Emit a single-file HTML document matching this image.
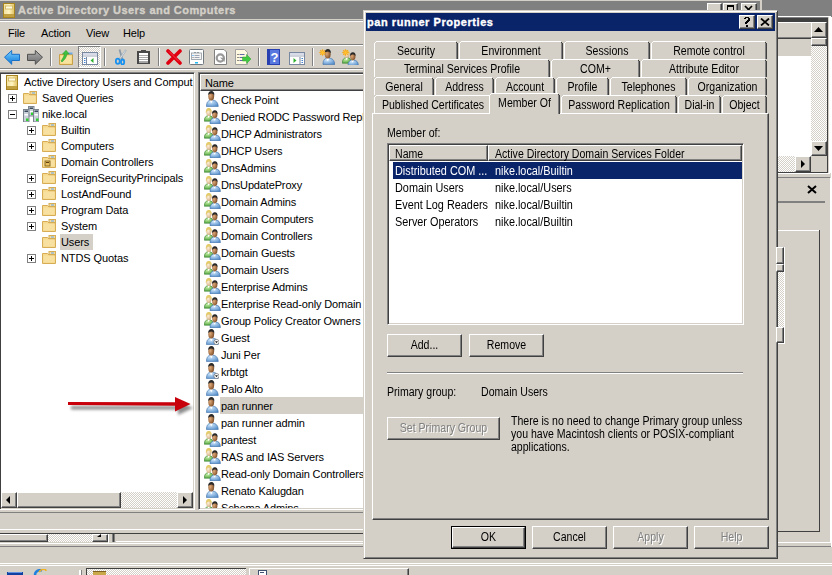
<!DOCTYPE html><html><head><meta charset="utf-8"><style>
html,body{margin:0;padding:0;}
body{width:832px;height:575px;overflow:hidden;position:relative;background:#d4d0c8;font-family:"Liberation Sans", sans-serif;}
body div{position:absolute;box-sizing:content-box;}
.t{white-space:nowrap;line-height:13px;}
.d{font-size:12px;transform:scaleX(0.88);transform-origin:0 0;}
.c{text-align:center;transform-origin:50% 0;}

</style></head><body>
<svg width="0" height="0" style="position:absolute"><defs><radialGradient id="ub" cx="0.35" cy="0.3" r="0.85"><stop offset="0" stop-color="#d0e8fc"/><stop offset="1" stop-color="#4a86c6"/></radialGradient><radialGradient id="gb" cx="0.35" cy="0.3" r="0.85"><stop offset="0" stop-color="#c8f0a8"/><stop offset="1" stop-color="#3e9a30"/></radialGradient><radialGradient id="uh" cx="0.35" cy="0.45" r="0.75"><stop offset="0" stop-color="#e0aa78"/><stop offset="1" stop-color="#70401c"/></radialGradient><radialGradient id="wh" cx="0.4" cy="0.45" r="0.75"><stop offset="0" stop-color="#fff0d8"/><stop offset="1" stop-color="#c8a070"/></radialGradient></defs></svg>
<div style="left:0px;top:0px;width:832px;height:1px;background:#d4d0c8"></div>
<div style="left:0px;top:1px;width:760px;height:18px;background:#808080"></div>
<div style="left:760px;top:0px;width:2px;height:19px;background:#d4d0c8"></div>
<div style="left:762px;top:0px;width:70px;height:19px;background:#808080"></div>
<svg style="position:absolute;left:3px;top:3px" width="12" height="15" viewBox="0 0 12 15"><defs><linearGradient id="sng" x1="0" y1="0" x2="1" y2="0"><stop offset="0" stop-color="#f0e0a0"/><stop offset="0.5" stop-color="#fff4c0"/><stop offset="1" stop-color="#e0c060"/></linearGradient></defs><rect x="0.5" y="0.5" width="11" height="14" fill="url(#sng)" stroke="#a88420"/><rect x="2.5" y="3" width="7" height="3" fill="#fffbe0" stroke="#c8a848" stroke-width="0.7"/><rect x="1" y="11" width="10" height="3" fill="#c0a040"/></svg>
<div class="t" style="left:18px;top:4px;font-size:11px;letter-spacing:0.45px;color:#d4d0c8;font-weight:bold;-webkit-text-stroke:0.35px #d4d0c8;">Active Directory Users and Computers</div>
<div style="left:707px;top:3px;width:13px;height:11px;background:#d4d0c8;border:1px solid;border-color:#fff #404040 #404040 #fff;box-shadow:inset -1px -1px #808080;"></div>
<div style="left:723px;top:3px;width:13px;height:11px;background:#d4d0c8;border:1px solid;border-color:#fff #404040 #404040 #fff;box-shadow:inset -1px -1px #808080;"></div>
<div style="left:741px;top:3px;width:14px;height:11px;background:#d4d0c8;border:1px solid;border-color:#fff #404040 #404040 #fff;box-shadow:inset -1px -1px #808080;"></div>
<div style="left:727px;top:5px;width:7px;height:5px;border:1px solid #000;border-top-width:2px;height:3px;width:5px"></div>
<svg style="position:absolute;left:744px;top:5px" width="9" height="8" viewBox="0 0 9 8"><path d="M1 1 L8 8 M8 1 L1 8" stroke="#000" stroke-width="1.7"/></svg>
<div style="left:0px;top:19px;width:832px;height:1px;background:#d4d0c8"></div>
<div style="left:0px;top:20px;width:832px;height:1px;background:#a0a0a0"></div>
<div style="left:0px;top:21px;width:832px;height:1px;background:#fff"></div>
<div class="t" style="left:8px;top:27px;font-size:11px;letter-spacing:-0.17px;color:#000;">File</div>
<div class="t" style="left:41px;top:27px;font-size:11px;letter-spacing:-0.17px;color:#000;">Action</div>
<div class="t" style="left:86px;top:27px;font-size:11px;letter-spacing:-0.17px;color:#000;">View</div>
<div class="t" style="left:123px;top:27px;font-size:11px;letter-spacing:-0.17px;color:#000;">Help</div>
<div style="left:0px;top:44px;width:832px;height:1px;background:#808080"></div>
<div style="left:0px;top:45px;width:832px;height:1px;background:#fff"></div>
<div style="left:0px;top:68px;width:832px;height:1px;background:#808080"></div>
<div style="left:0px;top:69px;width:832px;height:1px;background:#fff"></div>
<div style="left:-1px;top:72px;width:194px;height:436px;background:#fff;border:1px solid;border-color:#808080 #fff #fff #808080;box-shadow:inset 1px 1px #404040, inset -1px -1px #d4d0c8;"></div>
<svg style="position:absolute;left:6px;top:75px" width="12" height="15" viewBox="0 0 12 15"><defs><linearGradient id="sng" x1="0" y1="0" x2="1" y2="0"><stop offset="0" stop-color="#f0e0a0"/><stop offset="0.5" stop-color="#fff4c0"/><stop offset="1" stop-color="#e0c060"/></linearGradient></defs><rect x="0.5" y="0.5" width="11" height="14" fill="url(#sng)" stroke="#a88420"/><rect x="2.5" y="3" width="7" height="3" fill="#fffbe0" stroke="#c8a848" stroke-width="0.7"/><rect x="1" y="11" width="10" height="3" fill="#c0a040"/></svg>
<div class="t" style="left:24px;top:76px;font-size:11px;letter-spacing:-0.1px;color:#000;">Active Directory Users and Comput</div>
<div style="left:8px;top:94px;width:7px;height:7px;border:1px solid #808080;background:#fff"></div>
<div style="left:10px;top:98px;width:5px;height:1px;background:#000"></div>
<div style="left:12px;top:96px;width:1px;height:5px;background:#000"></div>
<svg style="position:absolute;left:23px;top:91px" width="14" height="13" viewBox="0 0 14 13"><path d="M0.5 2.5 h5 l1.5 1.5 h6.5 v8.5 h-13z" fill="#f6d98c" stroke="#d6ac55"/><rect x="7" y="0.5" width="6.5" height="3" fill="#f3dca0" stroke="#d6ac55"/><rect x="9" y="1.5" width="3" height="1" fill="#6aa8e8"/><rect x="1.5" y="4.5" width="11" height="7" fill="#f8e0a0"/></svg>
<div class="t" style="left:42px;top:92px;font-size:11px;letter-spacing:-0.1px;color:#000;">Saved Queries</div>
<div style="left:8px;top:110px;width:7px;height:7px;border:1px solid #808080;background:#fff"></div>
<div style="left:10px;top:114px;width:5px;height:1px;background:#000"></div>
<svg style="position:absolute;left:23px;top:106px" width="16" height="16" viewBox="0 0 16 16"><rect x="5.5" y="0.5" width="5.5" height="9.5" fill="#c8d0d8" stroke="#7a8590"/><rect x="6.5" y="1.5" width="3.5" height="1.5" fill="#3a4a5a"/><rect x="6.5" y="5" width="3.5" height="1.5" fill="#fff"/><rect x="8" y="6.5" width="2.5" height="2.5" fill="#30d030"/><rect x="0.5" y="3.5" width="5.5" height="12.5" fill="#c8d0d8" stroke="#7a8590"/><rect x="1.5" y="4.5" width="3.5" height="1.5" fill="#3a4a5a"/><rect x="1.5" y="8" width="3.5" height="1.5" fill="#fff"/><rect x="3" y="12.5" width="2.5" height="2.5" fill="#30d030"/><rect x="10.5" y="3.5" width="5.5" height="12.5" fill="#c8d0d8" stroke="#7a8590"/><rect x="11.5" y="4.5" width="3.5" height="1.5" fill="#3a4a5a"/><rect x="11.5" y="8" width="3.5" height="1.5" fill="#fff"/><rect x="13" y="12.5" width="2.5" height="2.5" fill="#30d030"/></svg>
<div class="t" style="left:42px;top:108px;font-size:11px;letter-spacing:-0.1px;color:#000;">nike.local</div>
<div style="left:27px;top:126px;width:7px;height:7px;border:1px solid #808080;background:#fff"></div>
<div style="left:29px;top:130px;width:5px;height:1px;background:#000"></div>
<div style="left:31px;top:128px;width:1px;height:5px;background:#000"></div>
<svg style="position:absolute;left:42px;top:123px" width="14" height="13" viewBox="0 0 14 13"><path d="M0.5 2.5 h5 l1.5 1.5 h6.5 v8.5 h-13z" fill="#f6d98c" stroke="#d6ac55"/><rect x="7" y="0.5" width="6.5" height="3" fill="#f3dca0" stroke="#d6ac55"/><rect x="9" y="1.5" width="3" height="1" fill="#6aa8e8"/><rect x="1.5" y="4.5" width="11" height="7" fill="#f8e0a0"/></svg>
<div class="t" style="left:61px;top:124px;font-size:11px;letter-spacing:-0.1px;color:#000;">Builtin</div>
<div style="left:27px;top:142px;width:7px;height:7px;border:1px solid #808080;background:#fff"></div>
<div style="left:29px;top:146px;width:5px;height:1px;background:#000"></div>
<div style="left:31px;top:144px;width:1px;height:5px;background:#000"></div>
<svg style="position:absolute;left:42px;top:139px" width="14" height="13" viewBox="0 0 14 13"><path d="M0.5 2.5 h5 l1.5 1.5 h6.5 v8.5 h-13z" fill="#f6d98c" stroke="#d6ac55"/><rect x="7" y="0.5" width="6.5" height="3" fill="#f3dca0" stroke="#d6ac55"/><rect x="9" y="1.5" width="3" height="1" fill="#6aa8e8"/><rect x="1.5" y="4.5" width="11" height="7" fill="#f8e0a0"/></svg>
<div class="t" style="left:61px;top:140px;font-size:11px;letter-spacing:-0.1px;color:#000;">Computers</div>
<svg style="position:absolute;left:42px;top:155px" width="14" height="13" viewBox="0 0 14 13"><path d="M0.5 2.5 h5 l1.5 1.5 h6.5 v8.5 h-13z" fill="#f6d98c" stroke="#d6ac55"/><rect x="7" y="0.5" width="6.5" height="3" fill="#f3dca0" stroke="#d6ac55"/><rect x="9" y="1.5" width="3" height="1" fill="#6aa8e8"/><rect x="1.5" y="4.5" width="11" height="7" fill="#f8e0a0"/><rect x="3" y="6" width="5" height="5" fill="#e8c060" stroke="#8a6a20" stroke-width="1"/><rect x="4" y="7" width="3" height="1" fill="#604010"/></svg>
<div class="t" style="left:61px;top:156px;font-size:11px;letter-spacing:-0.1px;color:#000;">Domain Controllers</div>
<div style="left:27px;top:174px;width:7px;height:7px;border:1px solid #808080;background:#fff"></div>
<div style="left:29px;top:178px;width:5px;height:1px;background:#000"></div>
<div style="left:31px;top:176px;width:1px;height:5px;background:#000"></div>
<svg style="position:absolute;left:42px;top:171px" width="14" height="13" viewBox="0 0 14 13"><path d="M0.5 2.5 h5 l1.5 1.5 h6.5 v8.5 h-13z" fill="#f6d98c" stroke="#d6ac55"/><rect x="7" y="0.5" width="6.5" height="3" fill="#f3dca0" stroke="#d6ac55"/><rect x="9" y="1.5" width="3" height="1" fill="#6aa8e8"/><rect x="1.5" y="4.5" width="11" height="7" fill="#f8e0a0"/></svg>
<div class="t" style="left:61px;top:172px;font-size:11px;letter-spacing:-0.1px;color:#000;">ForeignSecurityPrincipals</div>
<div style="left:27px;top:190px;width:7px;height:7px;border:1px solid #808080;background:#fff"></div>
<div style="left:29px;top:194px;width:5px;height:1px;background:#000"></div>
<div style="left:31px;top:192px;width:1px;height:5px;background:#000"></div>
<svg style="position:absolute;left:42px;top:187px" width="14" height="13" viewBox="0 0 14 13"><path d="M0.5 2.5 h5 l1.5 1.5 h6.5 v8.5 h-13z" fill="#f6d98c" stroke="#d6ac55"/><rect x="7" y="0.5" width="6.5" height="3" fill="#f3dca0" stroke="#d6ac55"/><rect x="9" y="1.5" width="3" height="1" fill="#6aa8e8"/><rect x="1.5" y="4.5" width="11" height="7" fill="#f8e0a0"/></svg>
<div class="t" style="left:61px;top:188px;font-size:11px;letter-spacing:-0.1px;color:#000;">LostAndFound</div>
<div style="left:27px;top:206px;width:7px;height:7px;border:1px solid #808080;background:#fff"></div>
<div style="left:29px;top:210px;width:5px;height:1px;background:#000"></div>
<div style="left:31px;top:208px;width:1px;height:5px;background:#000"></div>
<svg style="position:absolute;left:42px;top:203px" width="14" height="13" viewBox="0 0 14 13"><path d="M0.5 2.5 h5 l1.5 1.5 h6.5 v8.5 h-13z" fill="#f6d98c" stroke="#d6ac55"/><rect x="7" y="0.5" width="6.5" height="3" fill="#f3dca0" stroke="#d6ac55"/><rect x="9" y="1.5" width="3" height="1" fill="#6aa8e8"/><rect x="1.5" y="4.5" width="11" height="7" fill="#f8e0a0"/></svg>
<div class="t" style="left:61px;top:204px;font-size:11px;letter-spacing:-0.1px;color:#000;">Program Data</div>
<div style="left:27px;top:222px;width:7px;height:7px;border:1px solid #808080;background:#fff"></div>
<div style="left:29px;top:226px;width:5px;height:1px;background:#000"></div>
<div style="left:31px;top:224px;width:1px;height:5px;background:#000"></div>
<svg style="position:absolute;left:42px;top:219px" width="14" height="13" viewBox="0 0 14 13"><path d="M0.5 2.5 h5 l1.5 1.5 h6.5 v8.5 h-13z" fill="#f6d98c" stroke="#d6ac55"/><rect x="7" y="0.5" width="6.5" height="3" fill="#f3dca0" stroke="#d6ac55"/><rect x="9" y="1.5" width="3" height="1" fill="#6aa8e8"/><rect x="1.5" y="4.5" width="11" height="7" fill="#f8e0a0"/></svg>
<div class="t" style="left:61px;top:220px;font-size:11px;letter-spacing:-0.1px;color:#000;">System</div>
<div style="left:60px;top:234px;width:33px;height:16px;background:#d4d0c8"></div>
<svg style="position:absolute;left:42px;top:235px" width="14" height="13" viewBox="0 0 14 13"><path d="M0.5 2.5 h5 l1.5 1.5 h6.5 v8.5 h-13z" fill="#f6d98c" stroke="#d6ac55"/><rect x="7" y="0.5" width="6.5" height="3" fill="#f3dca0" stroke="#d6ac55"/><rect x="9" y="1.5" width="3" height="1" fill="#6aa8e8"/><rect x="1.5" y="4.5" width="11" height="7" fill="#f8e0a0"/></svg>
<div class="t" style="left:61px;top:236px;font-size:11px;letter-spacing:-0.1px;color:#000;">Users</div>
<div style="left:27px;top:254px;width:7px;height:7px;border:1px solid #808080;background:#fff"></div>
<div style="left:29px;top:258px;width:5px;height:1px;background:#000"></div>
<div style="left:31px;top:256px;width:1px;height:5px;background:#000"></div>
<svg style="position:absolute;left:42px;top:251px" width="14" height="13" viewBox="0 0 14 13"><path d="M0.5 2.5 h5 l1.5 1.5 h6.5 v8.5 h-13z" fill="#f6d98c" stroke="#d6ac55"/><rect x="7" y="0.5" width="6.5" height="3" fill="#f3dca0" stroke="#d6ac55"/><rect x="9" y="1.5" width="3" height="1" fill="#6aa8e8"/><rect x="1.5" y="4.5" width="11" height="7" fill="#f8e0a0"/></svg>
<div class="t" style="left:61px;top:252px;font-size:11px;letter-spacing:-0.1px;color:#000;">NTDS Quotas</div>
<div style="left:2px;top:492px;width:191px;height:16px;background-color:#fff;background-image:repeating-conic-gradient(#d4d0c8 0 25%, #fff 0 50%);background-size:2px 2px"></div>
<div style="left:1px;top:492px;width:14px;height:14px;background:#d4d0c8;border:1px solid;border-color:#fff #404040 #404040 #fff;box-shadow:inset -1px -1px #808080;"></div>
<svg style="position:absolute;left:6px;top:496px" width="5" height="8" viewBox="0 0 5 8"><path d="M4 0 v8 l-4 -4z" fill="#000"/></svg>
<div style="left:17px;top:492px;width:102px;height:14px;background:#d4d0c8;border:1px solid;border-color:#fff #404040 #404040 #fff;box-shadow:inset -1px -1px #808080;"></div>
<div style="left:177px;top:492px;width:14px;height:14px;background:#d4d0c8;border:1px solid;border-color:#fff #404040 #404040 #fff;box-shadow:inset -1px -1px #808080;"></div>
<svg style="position:absolute;left:183px;top:496px" width="5" height="8" viewBox="0 0 5 8"><path d="M0 0 v8 l4 -4z" fill="#000"/></svg>
<div style="left:198px;top:72px;width:578px;height:436px;background:#fff;border:1px solid;border-color:#808080 #fff #fff #808080;box-shadow:inset 1px 1px #404040, inset -1px -1px #d4d0c8;"></div>
<div style="left:200px;top:74px;width:574px;height:15px;background:#d4d0c8;border:1px solid;border-color:#fff #404040 #404040 #fff;box-shadow:inset -1px -1px #808080;"></div>
<div class="t" style="left:205px;top:77px;font-size:11px;letter-spacing:-0.17px;color:#000;">Name</div>
<div style="left:200px;top:91px;width:163px;height:417px;overflow:hidden">
<svg style="position:absolute;left:5px;top:0px" width="14" height="16"><path d="M1.5 15.6 C1.3 11.2 3.3 9 6.8 9 C10.8 9 13.2 11.4 13.2 15.6 Z" fill="url(#ub)" stroke="#3c6ea8" stroke-width="0.6"/><path d="M4.8 9.3 L6.3 12.6 L7.8 9.3z" fill="#fff"/><ellipse cx="6.2" cy="5.2" rx="2.9" ry="4.3" fill="url(#uh)"/><path d="M3.2 4.4 C3 1.3 4.7 0.1 6.4 0.1 C8.4 0.1 9.6 1.6 9.3 4.8 C8.7 3.3 7.6 2.5 6.3 2.5 C5 2.5 3.9 3.2 3.2 4.4z" fill="#2a2a2a"/></svg>
<div class="t" style="left:21px;top:3px;font-size:11px;letter-spacing:-0.15px">Check Point</div>
<svg style="position:absolute;left:4px;top:17px" width="17" height="16"><path d="M0.3 13.2 C0.2 9.6 1.8 7.6 4.8 7.6 C7.9 7.6 9.4 9.6 9.4 13.2 Z" fill="url(#gb)" stroke="#3a8030" stroke-width="0.6"/><path d="M3.5 7.8 L4.7 10.2 L5.9 7.8z" fill="#fff"/><ellipse cx="4.8" cy="4.3" rx="2.6" ry="3.7" fill="url(#wh)"/><path d="M1.9 5.2 C1.6 1.2 3.2 0 4.9 0 C6.8 0 8 1.4 7.7 5.5 C7.3 3.6 6.6 2.4 4.9 2.4 C3.3 2.4 2.4 3.5 1.9 5.2z" fill="#e4cc6a"/><path d="M6 15.7 C5.8 12 7.6 10 11 10 C14.6 10 16.4 12 16.4 15.7 Z" fill="url(#ub)" stroke="#3c6ea8" stroke-width="0.6"/><path d="M9.4 10.2 L10.7 12.8 L12 10.2z" fill="#fff"/><ellipse cx="10.8" cy="6.6" rx="2.6" ry="3.8" fill="url(#uh)"/><path d="M8.1 6 C7.9 3.3 9.3 2.3 10.9 2.3 C12.7 2.3 13.8 3.6 13.6 6.3 C13 5 12.1 4.4 10.9 4.4 C9.7 4.4 8.7 5 8.1 6z" fill="#2a2a2a"/></svg>
<div class="t" style="left:21px;top:20px;font-size:11px;letter-spacing:-0.15px">Denied RODC Password Replic</div>
<svg style="position:absolute;left:4px;top:34px" width="17" height="16"><path d="M0.3 13.2 C0.2 9.6 1.8 7.6 4.8 7.6 C7.9 7.6 9.4 9.6 9.4 13.2 Z" fill="url(#gb)" stroke="#3a8030" stroke-width="0.6"/><path d="M3.5 7.8 L4.7 10.2 L5.9 7.8z" fill="#fff"/><ellipse cx="4.8" cy="4.3" rx="2.6" ry="3.7" fill="url(#wh)"/><path d="M1.9 5.2 C1.6 1.2 3.2 0 4.9 0 C6.8 0 8 1.4 7.7 5.5 C7.3 3.6 6.6 2.4 4.9 2.4 C3.3 2.4 2.4 3.5 1.9 5.2z" fill="#e4cc6a"/><path d="M6 15.7 C5.8 12 7.6 10 11 10 C14.6 10 16.4 12 16.4 15.7 Z" fill="url(#ub)" stroke="#3c6ea8" stroke-width="0.6"/><path d="M9.4 10.2 L10.7 12.8 L12 10.2z" fill="#fff"/><ellipse cx="10.8" cy="6.6" rx="2.6" ry="3.8" fill="url(#uh)"/><path d="M8.1 6 C7.9 3.3 9.3 2.3 10.9 2.3 C12.7 2.3 13.8 3.6 13.6 6.3 C13 5 12.1 4.4 10.9 4.4 C9.7 4.4 8.7 5 8.1 6z" fill="#2a2a2a"/></svg>
<div class="t" style="left:21px;top:37px;font-size:11px;letter-spacing:-0.15px">DHCP Administrators</div>
<svg style="position:absolute;left:4px;top:51px" width="17" height="16"><path d="M0.3 13.2 C0.2 9.6 1.8 7.6 4.8 7.6 C7.9 7.6 9.4 9.6 9.4 13.2 Z" fill="url(#gb)" stroke="#3a8030" stroke-width="0.6"/><path d="M3.5 7.8 L4.7 10.2 L5.9 7.8z" fill="#fff"/><ellipse cx="4.8" cy="4.3" rx="2.6" ry="3.7" fill="url(#wh)"/><path d="M1.9 5.2 C1.6 1.2 3.2 0 4.9 0 C6.8 0 8 1.4 7.7 5.5 C7.3 3.6 6.6 2.4 4.9 2.4 C3.3 2.4 2.4 3.5 1.9 5.2z" fill="#e4cc6a"/><path d="M6 15.7 C5.8 12 7.6 10 11 10 C14.6 10 16.4 12 16.4 15.7 Z" fill="url(#ub)" stroke="#3c6ea8" stroke-width="0.6"/><path d="M9.4 10.2 L10.7 12.8 L12 10.2z" fill="#fff"/><ellipse cx="10.8" cy="6.6" rx="2.6" ry="3.8" fill="url(#uh)"/><path d="M8.1 6 C7.9 3.3 9.3 2.3 10.9 2.3 C12.7 2.3 13.8 3.6 13.6 6.3 C13 5 12.1 4.4 10.9 4.4 C9.7 4.4 8.7 5 8.1 6z" fill="#2a2a2a"/></svg>
<div class="t" style="left:21px;top:54px;font-size:11px;letter-spacing:-0.15px">DHCP Users</div>
<svg style="position:absolute;left:4px;top:68px" width="17" height="16"><path d="M0.3 13.2 C0.2 9.6 1.8 7.6 4.8 7.6 C7.9 7.6 9.4 9.6 9.4 13.2 Z" fill="url(#gb)" stroke="#3a8030" stroke-width="0.6"/><path d="M3.5 7.8 L4.7 10.2 L5.9 7.8z" fill="#fff"/><ellipse cx="4.8" cy="4.3" rx="2.6" ry="3.7" fill="url(#wh)"/><path d="M1.9 5.2 C1.6 1.2 3.2 0 4.9 0 C6.8 0 8 1.4 7.7 5.5 C7.3 3.6 6.6 2.4 4.9 2.4 C3.3 2.4 2.4 3.5 1.9 5.2z" fill="#e4cc6a"/><path d="M6 15.7 C5.8 12 7.6 10 11 10 C14.6 10 16.4 12 16.4 15.7 Z" fill="url(#ub)" stroke="#3c6ea8" stroke-width="0.6"/><path d="M9.4 10.2 L10.7 12.8 L12 10.2z" fill="#fff"/><ellipse cx="10.8" cy="6.6" rx="2.6" ry="3.8" fill="url(#uh)"/><path d="M8.1 6 C7.9 3.3 9.3 2.3 10.9 2.3 C12.7 2.3 13.8 3.6 13.6 6.3 C13 5 12.1 4.4 10.9 4.4 C9.7 4.4 8.7 5 8.1 6z" fill="#2a2a2a"/></svg>
<div class="t" style="left:21px;top:71px;font-size:11px;letter-spacing:-0.15px">DnsAdmins</div>
<svg style="position:absolute;left:4px;top:85px" width="17" height="16"><path d="M0.3 13.2 C0.2 9.6 1.8 7.6 4.8 7.6 C7.9 7.6 9.4 9.6 9.4 13.2 Z" fill="url(#gb)" stroke="#3a8030" stroke-width="0.6"/><path d="M3.5 7.8 L4.7 10.2 L5.9 7.8z" fill="#fff"/><ellipse cx="4.8" cy="4.3" rx="2.6" ry="3.7" fill="url(#wh)"/><path d="M1.9 5.2 C1.6 1.2 3.2 0 4.9 0 C6.8 0 8 1.4 7.7 5.5 C7.3 3.6 6.6 2.4 4.9 2.4 C3.3 2.4 2.4 3.5 1.9 5.2z" fill="#e4cc6a"/><path d="M6 15.7 C5.8 12 7.6 10 11 10 C14.6 10 16.4 12 16.4 15.7 Z" fill="url(#ub)" stroke="#3c6ea8" stroke-width="0.6"/><path d="M9.4 10.2 L10.7 12.8 L12 10.2z" fill="#fff"/><ellipse cx="10.8" cy="6.6" rx="2.6" ry="3.8" fill="url(#uh)"/><path d="M8.1 6 C7.9 3.3 9.3 2.3 10.9 2.3 C12.7 2.3 13.8 3.6 13.6 6.3 C13 5 12.1 4.4 10.9 4.4 C9.7 4.4 8.7 5 8.1 6z" fill="#2a2a2a"/></svg>
<div class="t" style="left:21px;top:88px;font-size:11px;letter-spacing:-0.15px">DnsUpdateProxy</div>
<svg style="position:absolute;left:4px;top:102px" width="17" height="16"><path d="M0.3 13.2 C0.2 9.6 1.8 7.6 4.8 7.6 C7.9 7.6 9.4 9.6 9.4 13.2 Z" fill="url(#gb)" stroke="#3a8030" stroke-width="0.6"/><path d="M3.5 7.8 L4.7 10.2 L5.9 7.8z" fill="#fff"/><ellipse cx="4.8" cy="4.3" rx="2.6" ry="3.7" fill="url(#wh)"/><path d="M1.9 5.2 C1.6 1.2 3.2 0 4.9 0 C6.8 0 8 1.4 7.7 5.5 C7.3 3.6 6.6 2.4 4.9 2.4 C3.3 2.4 2.4 3.5 1.9 5.2z" fill="#e4cc6a"/><path d="M6 15.7 C5.8 12 7.6 10 11 10 C14.6 10 16.4 12 16.4 15.7 Z" fill="url(#ub)" stroke="#3c6ea8" stroke-width="0.6"/><path d="M9.4 10.2 L10.7 12.8 L12 10.2z" fill="#fff"/><ellipse cx="10.8" cy="6.6" rx="2.6" ry="3.8" fill="url(#uh)"/><path d="M8.1 6 C7.9 3.3 9.3 2.3 10.9 2.3 C12.7 2.3 13.8 3.6 13.6 6.3 C13 5 12.1 4.4 10.9 4.4 C9.7 4.4 8.7 5 8.1 6z" fill="#2a2a2a"/></svg>
<div class="t" style="left:21px;top:105px;font-size:11px;letter-spacing:-0.15px">Domain Admins</div>
<svg style="position:absolute;left:4px;top:119px" width="17" height="16"><path d="M0.3 13.2 C0.2 9.6 1.8 7.6 4.8 7.6 C7.9 7.6 9.4 9.6 9.4 13.2 Z" fill="url(#gb)" stroke="#3a8030" stroke-width="0.6"/><path d="M3.5 7.8 L4.7 10.2 L5.9 7.8z" fill="#fff"/><ellipse cx="4.8" cy="4.3" rx="2.6" ry="3.7" fill="url(#wh)"/><path d="M1.9 5.2 C1.6 1.2 3.2 0 4.9 0 C6.8 0 8 1.4 7.7 5.5 C7.3 3.6 6.6 2.4 4.9 2.4 C3.3 2.4 2.4 3.5 1.9 5.2z" fill="#e4cc6a"/><path d="M6 15.7 C5.8 12 7.6 10 11 10 C14.6 10 16.4 12 16.4 15.7 Z" fill="url(#ub)" stroke="#3c6ea8" stroke-width="0.6"/><path d="M9.4 10.2 L10.7 12.8 L12 10.2z" fill="#fff"/><ellipse cx="10.8" cy="6.6" rx="2.6" ry="3.8" fill="url(#uh)"/><path d="M8.1 6 C7.9 3.3 9.3 2.3 10.9 2.3 C12.7 2.3 13.8 3.6 13.6 6.3 C13 5 12.1 4.4 10.9 4.4 C9.7 4.4 8.7 5 8.1 6z" fill="#2a2a2a"/></svg>
<div class="t" style="left:21px;top:122px;font-size:11px;letter-spacing:-0.15px">Domain Computers</div>
<svg style="position:absolute;left:4px;top:136px" width="17" height="16"><path d="M0.3 13.2 C0.2 9.6 1.8 7.6 4.8 7.6 C7.9 7.6 9.4 9.6 9.4 13.2 Z" fill="url(#gb)" stroke="#3a8030" stroke-width="0.6"/><path d="M3.5 7.8 L4.7 10.2 L5.9 7.8z" fill="#fff"/><ellipse cx="4.8" cy="4.3" rx="2.6" ry="3.7" fill="url(#wh)"/><path d="M1.9 5.2 C1.6 1.2 3.2 0 4.9 0 C6.8 0 8 1.4 7.7 5.5 C7.3 3.6 6.6 2.4 4.9 2.4 C3.3 2.4 2.4 3.5 1.9 5.2z" fill="#e4cc6a"/><path d="M6 15.7 C5.8 12 7.6 10 11 10 C14.6 10 16.4 12 16.4 15.7 Z" fill="url(#ub)" stroke="#3c6ea8" stroke-width="0.6"/><path d="M9.4 10.2 L10.7 12.8 L12 10.2z" fill="#fff"/><ellipse cx="10.8" cy="6.6" rx="2.6" ry="3.8" fill="url(#uh)"/><path d="M8.1 6 C7.9 3.3 9.3 2.3 10.9 2.3 C12.7 2.3 13.8 3.6 13.6 6.3 C13 5 12.1 4.4 10.9 4.4 C9.7 4.4 8.7 5 8.1 6z" fill="#2a2a2a"/></svg>
<div class="t" style="left:21px;top:139px;font-size:11px;letter-spacing:-0.15px">Domain Controllers</div>
<svg style="position:absolute;left:4px;top:153px" width="17" height="16"><path d="M0.3 13.2 C0.2 9.6 1.8 7.6 4.8 7.6 C7.9 7.6 9.4 9.6 9.4 13.2 Z" fill="url(#gb)" stroke="#3a8030" stroke-width="0.6"/><path d="M3.5 7.8 L4.7 10.2 L5.9 7.8z" fill="#fff"/><ellipse cx="4.8" cy="4.3" rx="2.6" ry="3.7" fill="url(#wh)"/><path d="M1.9 5.2 C1.6 1.2 3.2 0 4.9 0 C6.8 0 8 1.4 7.7 5.5 C7.3 3.6 6.6 2.4 4.9 2.4 C3.3 2.4 2.4 3.5 1.9 5.2z" fill="#e4cc6a"/><path d="M6 15.7 C5.8 12 7.6 10 11 10 C14.6 10 16.4 12 16.4 15.7 Z" fill="url(#ub)" stroke="#3c6ea8" stroke-width="0.6"/><path d="M9.4 10.2 L10.7 12.8 L12 10.2z" fill="#fff"/><ellipse cx="10.8" cy="6.6" rx="2.6" ry="3.8" fill="url(#uh)"/><path d="M8.1 6 C7.9 3.3 9.3 2.3 10.9 2.3 C12.7 2.3 13.8 3.6 13.6 6.3 C13 5 12.1 4.4 10.9 4.4 C9.7 4.4 8.7 5 8.1 6z" fill="#2a2a2a"/></svg>
<div class="t" style="left:21px;top:156px;font-size:11px;letter-spacing:-0.15px">Domain Guests</div>
<svg style="position:absolute;left:4px;top:170px" width="17" height="16"><path d="M0.3 13.2 C0.2 9.6 1.8 7.6 4.8 7.6 C7.9 7.6 9.4 9.6 9.4 13.2 Z" fill="url(#gb)" stroke="#3a8030" stroke-width="0.6"/><path d="M3.5 7.8 L4.7 10.2 L5.9 7.8z" fill="#fff"/><ellipse cx="4.8" cy="4.3" rx="2.6" ry="3.7" fill="url(#wh)"/><path d="M1.9 5.2 C1.6 1.2 3.2 0 4.9 0 C6.8 0 8 1.4 7.7 5.5 C7.3 3.6 6.6 2.4 4.9 2.4 C3.3 2.4 2.4 3.5 1.9 5.2z" fill="#e4cc6a"/><path d="M6 15.7 C5.8 12 7.6 10 11 10 C14.6 10 16.4 12 16.4 15.7 Z" fill="url(#ub)" stroke="#3c6ea8" stroke-width="0.6"/><path d="M9.4 10.2 L10.7 12.8 L12 10.2z" fill="#fff"/><ellipse cx="10.8" cy="6.6" rx="2.6" ry="3.8" fill="url(#uh)"/><path d="M8.1 6 C7.9 3.3 9.3 2.3 10.9 2.3 C12.7 2.3 13.8 3.6 13.6 6.3 C13 5 12.1 4.4 10.9 4.4 C9.7 4.4 8.7 5 8.1 6z" fill="#2a2a2a"/></svg>
<div class="t" style="left:21px;top:173px;font-size:11px;letter-spacing:-0.15px">Domain Users</div>
<svg style="position:absolute;left:4px;top:187px" width="17" height="16"><path d="M0.3 13.2 C0.2 9.6 1.8 7.6 4.8 7.6 C7.9 7.6 9.4 9.6 9.4 13.2 Z" fill="url(#gb)" stroke="#3a8030" stroke-width="0.6"/><path d="M3.5 7.8 L4.7 10.2 L5.9 7.8z" fill="#fff"/><ellipse cx="4.8" cy="4.3" rx="2.6" ry="3.7" fill="url(#wh)"/><path d="M1.9 5.2 C1.6 1.2 3.2 0 4.9 0 C6.8 0 8 1.4 7.7 5.5 C7.3 3.6 6.6 2.4 4.9 2.4 C3.3 2.4 2.4 3.5 1.9 5.2z" fill="#e4cc6a"/><path d="M6 15.7 C5.8 12 7.6 10 11 10 C14.6 10 16.4 12 16.4 15.7 Z" fill="url(#ub)" stroke="#3c6ea8" stroke-width="0.6"/><path d="M9.4 10.2 L10.7 12.8 L12 10.2z" fill="#fff"/><ellipse cx="10.8" cy="6.6" rx="2.6" ry="3.8" fill="url(#uh)"/><path d="M8.1 6 C7.9 3.3 9.3 2.3 10.9 2.3 C12.7 2.3 13.8 3.6 13.6 6.3 C13 5 12.1 4.4 10.9 4.4 C9.7 4.4 8.7 5 8.1 6z" fill="#2a2a2a"/></svg>
<div class="t" style="left:21px;top:190px;font-size:11px;letter-spacing:-0.15px">Enterprise Admins</div>
<svg style="position:absolute;left:4px;top:204px" width="17" height="16"><path d="M0.3 13.2 C0.2 9.6 1.8 7.6 4.8 7.6 C7.9 7.6 9.4 9.6 9.4 13.2 Z" fill="url(#gb)" stroke="#3a8030" stroke-width="0.6"/><path d="M3.5 7.8 L4.7 10.2 L5.9 7.8z" fill="#fff"/><ellipse cx="4.8" cy="4.3" rx="2.6" ry="3.7" fill="url(#wh)"/><path d="M1.9 5.2 C1.6 1.2 3.2 0 4.9 0 C6.8 0 8 1.4 7.7 5.5 C7.3 3.6 6.6 2.4 4.9 2.4 C3.3 2.4 2.4 3.5 1.9 5.2z" fill="#e4cc6a"/><path d="M6 15.7 C5.8 12 7.6 10 11 10 C14.6 10 16.4 12 16.4 15.7 Z" fill="url(#ub)" stroke="#3c6ea8" stroke-width="0.6"/><path d="M9.4 10.2 L10.7 12.8 L12 10.2z" fill="#fff"/><ellipse cx="10.8" cy="6.6" rx="2.6" ry="3.8" fill="url(#uh)"/><path d="M8.1 6 C7.9 3.3 9.3 2.3 10.9 2.3 C12.7 2.3 13.8 3.6 13.6 6.3 C13 5 12.1 4.4 10.9 4.4 C9.7 4.4 8.7 5 8.1 6z" fill="#2a2a2a"/></svg>
<div class="t" style="left:21px;top:207px;font-size:11px;letter-spacing:-0.15px">Enterprise Read-only Domain</div>
<svg style="position:absolute;left:4px;top:221px" width="17" height="16"><path d="M0.3 13.2 C0.2 9.6 1.8 7.6 4.8 7.6 C7.9 7.6 9.4 9.6 9.4 13.2 Z" fill="url(#gb)" stroke="#3a8030" stroke-width="0.6"/><path d="M3.5 7.8 L4.7 10.2 L5.9 7.8z" fill="#fff"/><ellipse cx="4.8" cy="4.3" rx="2.6" ry="3.7" fill="url(#wh)"/><path d="M1.9 5.2 C1.6 1.2 3.2 0 4.9 0 C6.8 0 8 1.4 7.7 5.5 C7.3 3.6 6.6 2.4 4.9 2.4 C3.3 2.4 2.4 3.5 1.9 5.2z" fill="#e4cc6a"/><path d="M6 15.7 C5.8 12 7.6 10 11 10 C14.6 10 16.4 12 16.4 15.7 Z" fill="url(#ub)" stroke="#3c6ea8" stroke-width="0.6"/><path d="M9.4 10.2 L10.7 12.8 L12 10.2z" fill="#fff"/><ellipse cx="10.8" cy="6.6" rx="2.6" ry="3.8" fill="url(#uh)"/><path d="M8.1 6 C7.9 3.3 9.3 2.3 10.9 2.3 C12.7 2.3 13.8 3.6 13.6 6.3 C13 5 12.1 4.4 10.9 4.4 C9.7 4.4 8.7 5 8.1 6z" fill="#2a2a2a"/></svg>
<div class="t" style="left:21px;top:224px;font-size:11px;letter-spacing:-0.15px">Group Policy Creator Owners</div>
<svg style="position:absolute;left:5px;top:238px" width="14" height="16"><path d="M1.5 15.6 C1.3 11.2 3.3 9 6.8 9 C10.8 9 13.2 11.4 13.2 15.6 Z" fill="url(#ub)" stroke="#3c6ea8" stroke-width="0.6"/><path d="M4.8 9.3 L6.3 12.6 L7.8 9.3z" fill="#fff"/><ellipse cx="6.2" cy="5.2" rx="2.9" ry="4.3" fill="url(#uh)"/><path d="M3.2 4.4 C3 1.3 4.7 0.1 6.4 0.1 C8.4 0.1 9.6 1.6 9.3 4.8 C8.7 3.3 7.6 2.5 6.3 2.5 C5 2.5 3.9 3.2 3.2 4.4z" fill="#2a2a2a"/><circle cx="11.5" cy="13" r="2.6" fill="#fff" stroke="#555" stroke-width="0.6"/><path d="M10 12.2 h3 l-1.5 2z" fill="#222"/></svg>
<div class="t" style="left:21px;top:241px;font-size:11px;letter-spacing:-0.15px">Guest</div>
<svg style="position:absolute;left:5px;top:255px" width="14" height="16"><path d="M1.5 15.6 C1.3 11.2 3.3 9 6.8 9 C10.8 9 13.2 11.4 13.2 15.6 Z" fill="url(#ub)" stroke="#3c6ea8" stroke-width="0.6"/><path d="M4.8 9.3 L6.3 12.6 L7.8 9.3z" fill="#fff"/><ellipse cx="6.2" cy="5.2" rx="2.9" ry="4.3" fill="url(#uh)"/><path d="M3.2 4.4 C3 1.3 4.7 0.1 6.4 0.1 C8.4 0.1 9.6 1.6 9.3 4.8 C8.7 3.3 7.6 2.5 6.3 2.5 C5 2.5 3.9 3.2 3.2 4.4z" fill="#2a2a2a"/></svg>
<div class="t" style="left:21px;top:258px;font-size:11px;letter-spacing:-0.15px">Juni Per</div>
<svg style="position:absolute;left:5px;top:272px" width="14" height="16"><path d="M1.5 15.6 C1.3 11.2 3.3 9 6.8 9 C10.8 9 13.2 11.4 13.2 15.6 Z" fill="url(#ub)" stroke="#3c6ea8" stroke-width="0.6"/><path d="M4.8 9.3 L6.3 12.6 L7.8 9.3z" fill="#fff"/><ellipse cx="6.2" cy="5.2" rx="2.9" ry="4.3" fill="url(#uh)"/><path d="M3.2 4.4 C3 1.3 4.7 0.1 6.4 0.1 C8.4 0.1 9.6 1.6 9.3 4.8 C8.7 3.3 7.6 2.5 6.3 2.5 C5 2.5 3.9 3.2 3.2 4.4z" fill="#2a2a2a"/><circle cx="11.5" cy="13" r="2.6" fill="#fff" stroke="#555" stroke-width="0.6"/><path d="M10 12.2 h3 l-1.5 2z" fill="#222"/></svg>
<div class="t" style="left:21px;top:275px;font-size:11px;letter-spacing:-0.15px">krbtgt</div>
<svg style="position:absolute;left:5px;top:289px" width="14" height="16"><path d="M1.5 15.6 C1.3 11.2 3.3 9 6.8 9 C10.8 9 13.2 11.4 13.2 15.6 Z" fill="url(#ub)" stroke="#3c6ea8" stroke-width="0.6"/><path d="M4.8 9.3 L6.3 12.6 L7.8 9.3z" fill="#fff"/><ellipse cx="6.2" cy="5.2" rx="2.9" ry="4.3" fill="url(#uh)"/><path d="M3.2 4.4 C3 1.3 4.7 0.1 6.4 0.1 C8.4 0.1 9.6 1.6 9.3 4.8 C8.7 3.3 7.6 2.5 6.3 2.5 C5 2.5 3.9 3.2 3.2 4.4z" fill="#2a2a2a"/></svg>
<div class="t" style="left:21px;top:292px;font-size:11px;letter-spacing:-0.15px">Palo Alto</div>
<div style="left:20px;top:306px;width:200px;height:17px;background:#d4d0c8"></div>
<svg style="position:absolute;left:5px;top:306px" width="14" height="16"><path d="M1.5 15.6 C1.3 11.2 3.3 9 6.8 9 C10.8 9 13.2 11.4 13.2 15.6 Z" fill="url(#ub)" stroke="#3c6ea8" stroke-width="0.6"/><path d="M4.8 9.3 L6.3 12.6 L7.8 9.3z" fill="#fff"/><ellipse cx="6.2" cy="5.2" rx="2.9" ry="4.3" fill="url(#uh)"/><path d="M3.2 4.4 C3 1.3 4.7 0.1 6.4 0.1 C8.4 0.1 9.6 1.6 9.3 4.8 C8.7 3.3 7.6 2.5 6.3 2.5 C5 2.5 3.9 3.2 3.2 4.4z" fill="#2a2a2a"/></svg>
<div class="t" style="left:21px;top:309px;font-size:11px;letter-spacing:-0.15px">pan runner</div>
<svg style="position:absolute;left:5px;top:323px" width="14" height="16"><path d="M1.5 15.6 C1.3 11.2 3.3 9 6.8 9 C10.8 9 13.2 11.4 13.2 15.6 Z" fill="url(#ub)" stroke="#3c6ea8" stroke-width="0.6"/><path d="M4.8 9.3 L6.3 12.6 L7.8 9.3z" fill="#fff"/><ellipse cx="6.2" cy="5.2" rx="2.9" ry="4.3" fill="url(#uh)"/><path d="M3.2 4.4 C3 1.3 4.7 0.1 6.4 0.1 C8.4 0.1 9.6 1.6 9.3 4.8 C8.7 3.3 7.6 2.5 6.3 2.5 C5 2.5 3.9 3.2 3.2 4.4z" fill="#2a2a2a"/></svg>
<div class="t" style="left:21px;top:326px;font-size:11px;letter-spacing:-0.15px">pan runner admin</div>
<svg style="position:absolute;left:4px;top:340px" width="17" height="16"><path d="M0.3 13.2 C0.2 9.6 1.8 7.6 4.8 7.6 C7.9 7.6 9.4 9.6 9.4 13.2 Z" fill="url(#gb)" stroke="#3a8030" stroke-width="0.6"/><path d="M3.5 7.8 L4.7 10.2 L5.9 7.8z" fill="#fff"/><ellipse cx="4.8" cy="4.3" rx="2.6" ry="3.7" fill="url(#wh)"/><path d="M1.9 5.2 C1.6 1.2 3.2 0 4.9 0 C6.8 0 8 1.4 7.7 5.5 C7.3 3.6 6.6 2.4 4.9 2.4 C3.3 2.4 2.4 3.5 1.9 5.2z" fill="#e4cc6a"/><path d="M6 15.7 C5.8 12 7.6 10 11 10 C14.6 10 16.4 12 16.4 15.7 Z" fill="url(#ub)" stroke="#3c6ea8" stroke-width="0.6"/><path d="M9.4 10.2 L10.7 12.8 L12 10.2z" fill="#fff"/><ellipse cx="10.8" cy="6.6" rx="2.6" ry="3.8" fill="url(#uh)"/><path d="M8.1 6 C7.9 3.3 9.3 2.3 10.9 2.3 C12.7 2.3 13.8 3.6 13.6 6.3 C13 5 12.1 4.4 10.9 4.4 C9.7 4.4 8.7 5 8.1 6z" fill="#2a2a2a"/></svg>
<div class="t" style="left:21px;top:343px;font-size:11px;letter-spacing:-0.15px">pantest</div>
<svg style="position:absolute;left:4px;top:357px" width="17" height="16"><path d="M0.3 13.2 C0.2 9.6 1.8 7.6 4.8 7.6 C7.9 7.6 9.4 9.6 9.4 13.2 Z" fill="url(#gb)" stroke="#3a8030" stroke-width="0.6"/><path d="M3.5 7.8 L4.7 10.2 L5.9 7.8z" fill="#fff"/><ellipse cx="4.8" cy="4.3" rx="2.6" ry="3.7" fill="url(#wh)"/><path d="M1.9 5.2 C1.6 1.2 3.2 0 4.9 0 C6.8 0 8 1.4 7.7 5.5 C7.3 3.6 6.6 2.4 4.9 2.4 C3.3 2.4 2.4 3.5 1.9 5.2z" fill="#e4cc6a"/><path d="M6 15.7 C5.8 12 7.6 10 11 10 C14.6 10 16.4 12 16.4 15.7 Z" fill="url(#ub)" stroke="#3c6ea8" stroke-width="0.6"/><path d="M9.4 10.2 L10.7 12.8 L12 10.2z" fill="#fff"/><ellipse cx="10.8" cy="6.6" rx="2.6" ry="3.8" fill="url(#uh)"/><path d="M8.1 6 C7.9 3.3 9.3 2.3 10.9 2.3 C12.7 2.3 13.8 3.6 13.6 6.3 C13 5 12.1 4.4 10.9 4.4 C9.7 4.4 8.7 5 8.1 6z" fill="#2a2a2a"/></svg>
<div class="t" style="left:21px;top:360px;font-size:11px;letter-spacing:-0.15px">RAS and IAS Servers</div>
<svg style="position:absolute;left:4px;top:374px" width="17" height="16"><path d="M0.3 13.2 C0.2 9.6 1.8 7.6 4.8 7.6 C7.9 7.6 9.4 9.6 9.4 13.2 Z" fill="url(#gb)" stroke="#3a8030" stroke-width="0.6"/><path d="M3.5 7.8 L4.7 10.2 L5.9 7.8z" fill="#fff"/><ellipse cx="4.8" cy="4.3" rx="2.6" ry="3.7" fill="url(#wh)"/><path d="M1.9 5.2 C1.6 1.2 3.2 0 4.9 0 C6.8 0 8 1.4 7.7 5.5 C7.3 3.6 6.6 2.4 4.9 2.4 C3.3 2.4 2.4 3.5 1.9 5.2z" fill="#e4cc6a"/><path d="M6 15.7 C5.8 12 7.6 10 11 10 C14.6 10 16.4 12 16.4 15.7 Z" fill="url(#ub)" stroke="#3c6ea8" stroke-width="0.6"/><path d="M9.4 10.2 L10.7 12.8 L12 10.2z" fill="#fff"/><ellipse cx="10.8" cy="6.6" rx="2.6" ry="3.8" fill="url(#uh)"/><path d="M8.1 6 C7.9 3.3 9.3 2.3 10.9 2.3 C12.7 2.3 13.8 3.6 13.6 6.3 C13 5 12.1 4.4 10.9 4.4 C9.7 4.4 8.7 5 8.1 6z" fill="#2a2a2a"/></svg>
<div class="t" style="left:21px;top:377px;font-size:11px;letter-spacing:-0.15px">Read-only Domain Controllers</div>
<svg style="position:absolute;left:5px;top:391px" width="14" height="16"><path d="M1.5 15.6 C1.3 11.2 3.3 9 6.8 9 C10.8 9 13.2 11.4 13.2 15.6 Z" fill="url(#ub)" stroke="#3c6ea8" stroke-width="0.6"/><path d="M4.8 9.3 L6.3 12.6 L7.8 9.3z" fill="#fff"/><ellipse cx="6.2" cy="5.2" rx="2.9" ry="4.3" fill="url(#uh)"/><path d="M3.2 4.4 C3 1.3 4.7 0.1 6.4 0.1 C8.4 0.1 9.6 1.6 9.3 4.8 C8.7 3.3 7.6 2.5 6.3 2.5 C5 2.5 3.9 3.2 3.2 4.4z" fill="#2a2a2a"/></svg>
<div class="t" style="left:21px;top:394px;font-size:11px;letter-spacing:-0.15px">Renato Kalugdan</div>
<svg style="position:absolute;left:4px;top:408px" width="17" height="16"><path d="M0.3 13.2 C0.2 9.6 1.8 7.6 4.8 7.6 C7.9 7.6 9.4 9.6 9.4 13.2 Z" fill="url(#gb)" stroke="#3a8030" stroke-width="0.6"/><path d="M3.5 7.8 L4.7 10.2 L5.9 7.8z" fill="#fff"/><ellipse cx="4.8" cy="4.3" rx="2.6" ry="3.7" fill="url(#wh)"/><path d="M1.9 5.2 C1.6 1.2 3.2 0 4.9 0 C6.8 0 8 1.4 7.7 5.5 C7.3 3.6 6.6 2.4 4.9 2.4 C3.3 2.4 2.4 3.5 1.9 5.2z" fill="#e4cc6a"/><path d="M6 15.7 C5.8 12 7.6 10 11 10 C14.6 10 16.4 12 16.4 15.7 Z" fill="url(#ub)" stroke="#3c6ea8" stroke-width="0.6"/><path d="M9.4 10.2 L10.7 12.8 L12 10.2z" fill="#fff"/><ellipse cx="10.8" cy="6.6" rx="2.6" ry="3.8" fill="url(#uh)"/><path d="M8.1 6 C7.9 3.3 9.3 2.3 10.9 2.3 C12.7 2.3 13.8 3.6 13.6 6.3 C13 5 12.1 4.4 10.9 4.4 C9.7 4.4 8.7 5 8.1 6z" fill="#2a2a2a"/></svg>
<div class="t" style="left:21px;top:411px;font-size:11px;letter-spacing:-0.15px">Schema Admins</div>
</div>
<div style="left:0px;top:512px;width:778px;height:1px;background:#808080"></div>
<div style="left:0px;top:529px;width:778px;height:1px;background:#fff"></div>
<div style="left:0px;top:533px;width:778px;height:1px;background:#404040"></div>
<div style="left:0px;top:534px;width:92px;height:8px;background-image:repeating-conic-gradient(#d4d0c8 0 25%, #fff 0 50%);background-size:2px 2px"></div>
<div style="left:-1px;top:534px;width:47px;height:6px;background:#d4d0c8;border:1px solid;border-color:#fff #404040 #404040 #fff;box-shadow:inset -1px -1px #808080;"></div>
<div style="left:92px;top:534px;width:14px;height:6px;background:#d4d0c8;border:1px solid;border-color:#fff #404040 #404040 #fff;box-shadow:inset -1px -1px #808080;"></div>
<svg style="position:absolute;left:97px;top:534px" width="5" height="3" viewBox="0 0 5 3"><path d="M0 3 L4 0 V3z" fill="#000"/></svg>
<div style="left:108px;top:534px;width:1px;height:9px;background:#fff"></div>
<div style="left:112px;top:534px;width:1px;height:8px;background:#808080"></div>
<div style="left:113px;top:534px;width:1px;height:8px;background:#404040"></div>
<div style="left:114px;top:534px;width:1px;height:8px;background:#808080"></div>
<div style="left:0px;top:543px;width:778px;height:1px;background:#fff"></div>
<div style="left:116px;top:541px;width:662px;height:1px;background:#fff"></div>
<div style="left:0px;top:546px;width:832px;height:1px;background:#808080"></div>
<div style="left:0px;top:563px;width:832px;height:1px;background:#fff"></div>
<div style="left:0px;top:565px;width:832px;height:1px;background:#fff"></div>
<div style="left:79px;top:570px;width:2px;height:5px;background:#fff"></div>
<div style="left:81px;top:570px;width:1px;height:5px;background:#808080"></div>
<div style="left:86px;top:568px;width:159px;height:7px;border-top:1px solid #404040;border-left:1px solid #404040;background-image:repeating-conic-gradient(#d4d0c8 0 25%, #fff 0 50%);background-size:2px 2px"></div>
<div style="left:249px;top:568px;width:158px;height:8px;background:#d4d0c8;border:1px solid;border-color:#fff #404040 #404040 #fff;box-shadow:inset -1px -1px #808080;"></div>
<svg style="position:absolute;left:64px;top:393px" width="132" height="24" viewBox="0 0 132 24"><defs><filter id="sh" x="-20%" y="-50%" width="140%" height="200%"><feGaussianBlur stdDeviation="1.5"/></filter></defs><g transform="translate(3,4)" filter="url(#sh)" opacity="0.45"><rect x="4" y="9" width="108" height="3.5" fill="#000"/><path d="M111 4 L126 11 L111 18z" fill="#000"/></g><path d="M4 9 L112 9.2 L112 12.8 L4 12z" fill="#c8000c"/><path d="M111 4 L126.5 11 L111 18.5z" fill="#c8000c"/></svg>
<div style="left:363px;top:10px;width:413px;height:547px;background:#d4d0c8;border:1px solid;border-color:#d4d0c8 #404040 #404040 #d4d0c8;box-shadow:inset 1px 1px #fff, inset -1px -1px #808080"></div>
<div style="left:366px;top:13px;width:409px;height:18px;background:#0a246a"></div>
<div class="t" style="left:367px;top:16px;font-size:11px;letter-spacing:0.55px;color:#fff;font-weight:bold;-webkit-text-stroke:0.35px #fff;">pan runner Properties</div>
<div style="left:739px;top:15px;width:14px;height:12px;background:#d4d0c8;border:1px solid;border-color:#fff #404040 #404040 #fff;box-shadow:inset -1px -1px #808080;"></div>
<div style="left:757px;top:15px;width:14px;height:12px;background:#d4d0c8;border:1px solid;border-color:#fff #404040 #404040 #fff;box-shadow:inset -1px -1px #808080;"></div>
<svg style="position:absolute;left:743px;top:17px" width="8" height="10" viewBox="0 0 8 10"><path d="M2 0h4v1h1v3h-1v1h-1v1h-1v1h-2v-2h1v-1h1v-1h1v-2h-2v1h-2v-1h1z" fill="#000"/><rect x="3" y="8" width="2" height="2" fill="#000"/></svg>
<svg style="position:absolute;left:760px;top:18px" width="10" height="8" viewBox="0 0 10 8"><path d="M1 0.5 L9 7.5 M9 0.5 L1 7.5" stroke="#000" stroke-width="1.8"/></svg>
<div style="left:374px;top:41px;width:84px;height:19px;background:#d4d0c8"></div>
<div style="left:374px;top:43px;width:1px;height:17px;background:#fff"></div>
<div style="left:376px;top:41px;width:80px;height:1px;background:#fff"></div>
<div style="left:375px;top:42px;width:1px;height:1px;background:#fff"></div>
<div style="left:457px;top:43px;width:1px;height:17px;background:#404040"></div>
<div style="left:456px;top:42px;width:1px;height:1px;background:#404040"></div>
<div style="left:456px;top:43px;width:1px;height:17px;background:#808080"></div>
<div class="t d c" style="left:374px;top:45px;width:84px;color:#000;">Security</div>
<div style="left:459px;top:41px;width:104px;height:19px;background:#d4d0c8"></div>
<div style="left:459px;top:43px;width:1px;height:17px;background:#fff"></div>
<div style="left:461px;top:41px;width:100px;height:1px;background:#fff"></div>
<div style="left:460px;top:42px;width:1px;height:1px;background:#fff"></div>
<div style="left:562px;top:43px;width:1px;height:17px;background:#404040"></div>
<div style="left:561px;top:42px;width:1px;height:1px;background:#404040"></div>
<div style="left:561px;top:43px;width:1px;height:17px;background:#808080"></div>
<div class="t d c" style="left:459px;top:45px;width:104px;color:#000;">Environment</div>
<div style="left:564px;top:41px;width:86px;height:19px;background:#d4d0c8"></div>
<div style="left:564px;top:43px;width:1px;height:17px;background:#fff"></div>
<div style="left:566px;top:41px;width:82px;height:1px;background:#fff"></div>
<div style="left:565px;top:42px;width:1px;height:1px;background:#fff"></div>
<div style="left:649px;top:43px;width:1px;height:17px;background:#404040"></div>
<div style="left:648px;top:42px;width:1px;height:1px;background:#404040"></div>
<div style="left:648px;top:43px;width:1px;height:17px;background:#808080"></div>
<div class="t d c" style="left:564px;top:45px;width:86px;color:#000;">Sessions</div>
<div style="left:651px;top:41px;width:116px;height:19px;background:#d4d0c8"></div>
<div style="left:651px;top:43px;width:1px;height:17px;background:#fff"></div>
<div style="left:653px;top:41px;width:112px;height:1px;background:#fff"></div>
<div style="left:652px;top:42px;width:1px;height:1px;background:#fff"></div>
<div style="left:766px;top:43px;width:1px;height:17px;background:#404040"></div>
<div style="left:765px;top:42px;width:1px;height:1px;background:#404040"></div>
<div style="left:765px;top:43px;width:1px;height:17px;background:#808080"></div>
<div class="t d c" style="left:651px;top:45px;width:116px;color:#000;">Remote control</div>
<div style="left:374px;top:59px;width:176px;height:19px;background:#d4d0c8"></div>
<div style="left:374px;top:61px;width:1px;height:17px;background:#fff"></div>
<div style="left:376px;top:59px;width:172px;height:1px;background:#fff"></div>
<div style="left:375px;top:60px;width:1px;height:1px;background:#fff"></div>
<div style="left:549px;top:61px;width:1px;height:17px;background:#404040"></div>
<div style="left:548px;top:60px;width:1px;height:1px;background:#404040"></div>
<div style="left:548px;top:61px;width:1px;height:17px;background:#808080"></div>
<div class="t d c" style="left:374px;top:63px;width:176px;color:#000;">Terminal Services Profile</div>
<div style="left:551px;top:59px;width:89px;height:19px;background:#d4d0c8"></div>
<div style="left:551px;top:61px;width:1px;height:17px;background:#fff"></div>
<div style="left:553px;top:59px;width:85px;height:1px;background:#fff"></div>
<div style="left:552px;top:60px;width:1px;height:1px;background:#fff"></div>
<div style="left:639px;top:61px;width:1px;height:17px;background:#404040"></div>
<div style="left:638px;top:60px;width:1px;height:1px;background:#404040"></div>
<div style="left:638px;top:61px;width:1px;height:17px;background:#808080"></div>
<div class="t d c" style="left:551px;top:63px;width:89px;color:#000;">COM+</div>
<div style="left:641px;top:59px;width:126px;height:19px;background:#d4d0c8"></div>
<div style="left:641px;top:61px;width:1px;height:17px;background:#fff"></div>
<div style="left:643px;top:59px;width:122px;height:1px;background:#fff"></div>
<div style="left:642px;top:60px;width:1px;height:1px;background:#fff"></div>
<div style="left:766px;top:61px;width:1px;height:17px;background:#404040"></div>
<div style="left:765px;top:60px;width:1px;height:1px;background:#404040"></div>
<div style="left:765px;top:61px;width:1px;height:17px;background:#808080"></div>
<div class="t d c" style="left:641px;top:63px;width:126px;color:#000;">Attribute Editor</div>
<div style="left:374px;top:77px;width:60px;height:19px;background:#d4d0c8"></div>
<div style="left:374px;top:79px;width:1px;height:17px;background:#fff"></div>
<div style="left:376px;top:77px;width:56px;height:1px;background:#fff"></div>
<div style="left:375px;top:78px;width:1px;height:1px;background:#fff"></div>
<div style="left:433px;top:79px;width:1px;height:17px;background:#404040"></div>
<div style="left:432px;top:78px;width:1px;height:1px;background:#404040"></div>
<div style="left:432px;top:79px;width:1px;height:17px;background:#808080"></div>
<div class="t d c" style="left:374px;top:81px;width:60px;color:#000;">General</div>
<div style="left:435px;top:77px;width:59px;height:19px;background:#d4d0c8"></div>
<div style="left:435px;top:79px;width:1px;height:17px;background:#fff"></div>
<div style="left:437px;top:77px;width:55px;height:1px;background:#fff"></div>
<div style="left:436px;top:78px;width:1px;height:1px;background:#fff"></div>
<div style="left:493px;top:79px;width:1px;height:17px;background:#404040"></div>
<div style="left:492px;top:78px;width:1px;height:1px;background:#404040"></div>
<div style="left:492px;top:79px;width:1px;height:17px;background:#808080"></div>
<div class="t d c" style="left:435px;top:81px;width:59px;color:#000;">Address</div>
<div style="left:495px;top:77px;width:60px;height:19px;background:#d4d0c8"></div>
<div style="left:495px;top:79px;width:1px;height:17px;background:#fff"></div>
<div style="left:497px;top:77px;width:56px;height:1px;background:#fff"></div>
<div style="left:496px;top:78px;width:1px;height:1px;background:#fff"></div>
<div style="left:554px;top:79px;width:1px;height:17px;background:#404040"></div>
<div style="left:553px;top:78px;width:1px;height:1px;background:#404040"></div>
<div style="left:553px;top:79px;width:1px;height:17px;background:#808080"></div>
<div class="t d c" style="left:495px;top:81px;width:60px;color:#000;">Account</div>
<div style="left:556px;top:77px;width:53px;height:19px;background:#d4d0c8"></div>
<div style="left:556px;top:79px;width:1px;height:17px;background:#fff"></div>
<div style="left:558px;top:77px;width:49px;height:1px;background:#fff"></div>
<div style="left:557px;top:78px;width:1px;height:1px;background:#fff"></div>
<div style="left:608px;top:79px;width:1px;height:17px;background:#404040"></div>
<div style="left:607px;top:78px;width:1px;height:1px;background:#404040"></div>
<div style="left:607px;top:79px;width:1px;height:17px;background:#808080"></div>
<div class="t d c" style="left:556px;top:81px;width:53px;color:#000;">Profile</div>
<div style="left:610px;top:77px;width:77px;height:19px;background:#d4d0c8"></div>
<div style="left:610px;top:79px;width:1px;height:17px;background:#fff"></div>
<div style="left:612px;top:77px;width:73px;height:1px;background:#fff"></div>
<div style="left:611px;top:78px;width:1px;height:1px;background:#fff"></div>
<div style="left:686px;top:79px;width:1px;height:17px;background:#404040"></div>
<div style="left:685px;top:78px;width:1px;height:1px;background:#404040"></div>
<div style="left:685px;top:79px;width:1px;height:17px;background:#808080"></div>
<div class="t d c" style="left:610px;top:81px;width:77px;color:#000;">Telephones</div>
<div style="left:688px;top:77px;width:79px;height:19px;background:#d4d0c8"></div>
<div style="left:688px;top:79px;width:1px;height:17px;background:#fff"></div>
<div style="left:690px;top:77px;width:75px;height:1px;background:#fff"></div>
<div style="left:689px;top:78px;width:1px;height:1px;background:#fff"></div>
<div style="left:766px;top:79px;width:1px;height:17px;background:#404040"></div>
<div style="left:765px;top:78px;width:1px;height:1px;background:#404040"></div>
<div style="left:765px;top:79px;width:1px;height:17px;background:#808080"></div>
<div class="t d c" style="left:688px;top:81px;width:79px;color:#000;">Organization</div>
<div style="left:374px;top:95px;width:118px;height:19px;background:#d4d0c8"></div>
<div style="left:374px;top:97px;width:1px;height:17px;background:#fff"></div>
<div style="left:376px;top:95px;width:114px;height:1px;background:#fff"></div>
<div style="left:375px;top:96px;width:1px;height:1px;background:#fff"></div>
<div style="left:491px;top:97px;width:1px;height:17px;background:#404040"></div>
<div style="left:490px;top:96px;width:1px;height:1px;background:#404040"></div>
<div style="left:490px;top:97px;width:1px;height:17px;background:#808080"></div>
<div class="t d c" style="left:374px;top:99px;width:118px;color:#000;">Published Certificates</div>
<div style="left:561px;top:95px;width:116px;height:19px;background:#d4d0c8"></div>
<div style="left:561px;top:97px;width:1px;height:17px;background:#fff"></div>
<div style="left:563px;top:95px;width:112px;height:1px;background:#fff"></div>
<div style="left:562px;top:96px;width:1px;height:1px;background:#fff"></div>
<div style="left:676px;top:97px;width:1px;height:17px;background:#404040"></div>
<div style="left:675px;top:96px;width:1px;height:1px;background:#404040"></div>
<div style="left:675px;top:97px;width:1px;height:17px;background:#808080"></div>
<div class="t d c" style="left:561px;top:99px;width:116px;color:#000;">Password Replication</div>
<div style="left:678px;top:95px;width:43px;height:19px;background:#d4d0c8"></div>
<div style="left:678px;top:97px;width:1px;height:17px;background:#fff"></div>
<div style="left:680px;top:95px;width:39px;height:1px;background:#fff"></div>
<div style="left:679px;top:96px;width:1px;height:1px;background:#fff"></div>
<div style="left:720px;top:97px;width:1px;height:17px;background:#404040"></div>
<div style="left:719px;top:96px;width:1px;height:1px;background:#404040"></div>
<div style="left:719px;top:97px;width:1px;height:17px;background:#808080"></div>
<div class="t d c" style="left:678px;top:99px;width:43px;color:#000;">Dial-in</div>
<div style="left:722px;top:95px;width:45px;height:19px;background:#d4d0c8"></div>
<div style="left:722px;top:97px;width:1px;height:17px;background:#fff"></div>
<div style="left:724px;top:95px;width:41px;height:1px;background:#fff"></div>
<div style="left:723px;top:96px;width:1px;height:1px;background:#fff"></div>
<div style="left:766px;top:97px;width:1px;height:17px;background:#404040"></div>
<div style="left:765px;top:96px;width:1px;height:1px;background:#404040"></div>
<div style="left:765px;top:97px;width:1px;height:17px;background:#808080"></div>
<div class="t d c" style="left:722px;top:99px;width:45px;color:#000;">Object</div>
<div style="left:372px;top:113px;width:395px;height:405px;border:1px solid;border-color:#fff #404040 #404040 #fff;box-shadow:inset -1px -1px #808080;background:#d4d0c8"></div>
<div style="left:489px;top:93px;width:71px;height:21px;background:#d4d0c8"></div>
<div style="left:489px;top:95px;width:1px;height:19px;background:#fff"></div>
<div style="left:491px;top:93px;width:67px;height:1px;background:#fff"></div>
<div style="left:490px;top:94px;width:1px;height:1px;background:#fff"></div>
<div style="left:559px;top:95px;width:1px;height:19px;background:#404040"></div>
<div style="left:558px;top:94px;width:1px;height:1px;background:#404040"></div>
<div style="left:558px;top:95px;width:1px;height:19px;background:#808080"></div>
<div class="t d c" style="left:489px;top:97px;width:71px;color:#000;">Member Of</div>
<div class="t d" style="left:387px;top:127px;color:#000;">Member of:</div>
<div style="left:387px;top:143px;width:355px;height:180px;background:#fff;border:1px solid;border-color:#808080 #fff #fff #808080;box-shadow:inset 1px 1px #404040, inset -1px -1px #d4d0c8;"></div>
<div style="left:389px;top:145px;width:97px;height:14px;background:#d4d0c8;border:1px solid;border-color:#fff #404040 #404040 #fff;box-shadow:inset -1px -1px #808080;"></div>
<div style="left:488px;top:145px;width:252px;height:14px;background:#d4d0c8;border:1px solid;border-color:#fff #404040 #404040 #fff;box-shadow:inset -1px -1px #808080;"></div>
<div class="t d" style="left:395px;top:148px;color:#000;">Name</div>
<div class="t d" style="left:495px;top:148px;color:#000;">Active Directory Domain Services Folder</div>
<div style="left:393px;top:162px;width:349px;height:17px;background:#0a246a"></div>
<div class="t d" style="left:395px;top:165px;color:#fff;transform:scaleX(0.905);">Distributed COM ...</div>
<div class="t d" style="left:495px;top:165px;color:#fff;transform:scaleX(0.905);">nike.local/Builtin</div>
<div class="t d" style="left:395px;top:182px;color:#000;transform:scaleX(0.905);">Domain Users</div>
<div class="t d" style="left:495px;top:182px;color:#000;transform:scaleX(0.905);">nike.local/Users</div>
<div class="t d" style="left:395px;top:199px;color:#000;transform:scaleX(0.905);">Event Log Readers</div>
<div class="t d" style="left:495px;top:199px;color:#000;transform:scaleX(0.905);">nike.local/Builtin</div>
<div class="t d" style="left:395px;top:216px;color:#000;transform:scaleX(0.905);">Server Operators</div>
<div class="t d" style="left:495px;top:216px;color:#000;transform:scaleX(0.905);">nike.local/Builtin</div>
<div style="left:387px;top:334px;width:73px;height:21px;background:#d4d0c8;border:1px solid;border-color:#fff #404040 #404040 #fff;box-shadow:inset -1px -1px #808080;"></div>
<div class="t d c" style="left:387px;top:339px;width:75px;color:#000;">Add...</div>
<div style="left:469px;top:334px;width:73px;height:21px;background:#d4d0c8;border:1px solid;border-color:#fff #404040 #404040 #fff;box-shadow:inset -1px -1px #808080;"></div>
<div class="t d c" style="left:469px;top:339px;width:75px;color:#000;">Remove</div>
<div style="left:387px;top:372px;width:356px;height:1px;background:#808080"></div>
<div style="left:387px;top:373px;width:356px;height:1px;background:#fff"></div>
<div class="t d" style="left:387px;top:386px;color:#000;">Primary group:</div>
<div class="t d" style="left:481px;top:386px;color:#000;">Domain Users</div>
<div style="left:387px;top:417px;width:111px;height:21px;background:#d4d0c8;border:1px solid;border-color:#fff #404040 #404040 #fff;box-shadow:inset -1px -1px #808080;"></div>
<div class="t d c" style="left:388px;top:423px;width:113px;color:#fff;">Set Primary Group</div>
<div class="t d c" style="left:387px;top:422px;width:113px;color:#808080;">Set Primary Group</div>
<div class="t d" style="left:511px;top:415px;color:#000;">There is no need to change Primary group unless</div>
<div class="t d" style="left:511px;top:428px;color:#000;">you have Macintosh clients or POSIX-compliant</div>
<div class="t d" style="left:511px;top:441px;color:#000;">applications.</div>
<div style="left:451px;top:526px;width:73px;height:21px;border:1px solid #000"></div>
<div style="left:452px;top:527px;width:71px;height:19px;background:#d4d0c8;border:1px solid;border-color:#fff #404040 #404040 #fff;box-shadow:inset -1px -1px #808080"></div>
<div class="t d c" style="left:451px;top:531px;width:75px;color:#000;">OK</div>
<div style="left:532px;top:526px;width:73px;height:21px;background:#d4d0c8;border:1px solid;border-color:#fff #404040 #404040 #fff;box-shadow:inset -1px -1px #808080;"></div>
<div class="t d c" style="left:532px;top:531px;width:75px;color:#000;">Cancel</div>
<div style="left:613px;top:526px;width:73px;height:21px;background:#d4d0c8;border:1px solid;border-color:#fff #404040 #404040 #fff;box-shadow:inset -1px -1px #808080;"></div>
<div class="t d c" style="left:614px;top:532px;width:75px;color:#fff;">Apply</div>
<div class="t d c" style="left:613px;top:531px;width:75px;color:#808080;">Apply</div>
<div style="left:694px;top:526px;width:73px;height:21px;background:#d4d0c8;border:1px solid;border-color:#fff #404040 #404040 #fff;box-shadow:inset -1px -1px #808080;"></div>
<div class="t d c" style="left:695px;top:532px;width:75px;color:#fff;">Help</div>
<div class="t d c" style="left:694px;top:531px;width:75px;color:#808080;">Help</div>
<svg style="position:absolute;left:4px;top:50px" width="17" height="15" viewBox="0 0 17 15"><defs><linearGradient id="bg1" x1="0" y1="0" x2="0" y2="1"><stop offset="0" stop-color="#7cd0ff"/><stop offset="1" stop-color="#0a78d8"/></linearGradient></defs><path d="M0.5 7.2 L7.7 0.5 V4.3 H15.5 V10.5 H7.7 V14.3z" fill="url(#bg1)" stroke="#1a70c8" stroke-width="1"/></svg>
<svg style="position:absolute;left:27px;top:50px" width="17" height="15" viewBox="0 0 17 15"><defs><linearGradient id="bg2" x1="0" y1="0" x2="0" y2="1"><stop offset="0" stop-color="#b0b0b0"/><stop offset="1" stop-color="#6a6a6a"/></linearGradient></defs><path d="M15.5 7.2 L8.3 0.5 V4.3 H0.5 V10.5 H8.3 V14.3z" fill="url(#bg2)" stroke="#505050" stroke-width="1"/></svg>
<div style="left:50px;top:48px;width:1px;height:18px;background:#808080"></div>
<div style="left:51px;top:48px;width:1px;height:18px;background:#fff"></div>
<svg style="position:absolute;left:59px;top:50px" width="15" height="15" viewBox="0 0 15 15"><path d="M0.5 4.5 h13 v10 h-13z" fill="#f4d47c" stroke="#c8a048"/><rect x="1.5" y="6" width="11" height="7.5" fill="#f8e2a0"/><rect x="9" y="2.5" width="4.5" height="2" fill="#6aa8e8"/><path d="M2 11 C4 8 5 6 5.5 4 L3.5 4 L7 0.3 L10.2 4 L8 4 C7.5 7 6 9.5 3 12z" fill="#40c040" stroke="#20a020" stroke-width="0.5"/></svg>
<div style="left:78px;top:46px;width:21px;height:21px;border-top:1px solid #808080;border-left:1px solid #808080;border-bottom:1px solid #fff;border-right:1px solid #fff;width:21px;height:20px;background-image:repeating-conic-gradient(#d4d0c8 0 25%, #fff 0 50%);background-size:2px 2px"></div>
<svg style="position:absolute;left:82px;top:52px" width="16" height="13" viewBox="0 0 16 13"><rect x="0.5" y="0.5" width="15" height="12" fill="#fff" stroke="#7888a0"/><rect x="1" y="1" width="14" height="2" fill="#d8dce8"/><rect x="1" y="3.5" width="14" height="1" fill="#a0a8b8"/><rect x="4" y="5" width="1" height="7.5" fill="#7888a0"/><rect x="2" y="6" width="1.5" height="1" fill="#4080d0"/><rect x="2" y="8" width="1.5" height="1" fill="#4080d0"/><rect x="2" y="10" width="1.5" height="1" fill="#4080d0"/><path d="M8.5 8.5 L11.5 6 V11z" fill="#30b030"/></svg>
<div style="left:104px;top:48px;width:1px;height:18px;background:#808080"></div>
<div style="left:105px;top:48px;width:1px;height:18px;background:#fff"></div>
<svg style="position:absolute;left:115px;top:49px" width="12" height="16" viewBox="0 0 12 16"><path d="M4.5 0.5 L7.5 11" stroke="#8a9aa8" stroke-width="1.8"/><path d="M11 1 L4 11" stroke="#9aaab8" stroke-width="1.8"/><path d="M10.6 1.5 L5 9.5" stroke="#fff" stroke-width="0.6"/><ellipse cx="2.8" cy="12.3" rx="2" ry="2.6" fill="none" stroke="#1890f0" stroke-width="1.8"/><ellipse cx="7.6" cy="13" rx="1.6" ry="2.5" fill="none" stroke="#1890f0" stroke-width="1.8"/></svg>
<svg style="position:absolute;left:137px;top:50px" width="13" height="14" viewBox="0 0 13 14"><path d="M1 2 h11 v11.5 h-11z" fill="#fff" stroke="#484848" stroke-width="2"/><rect x="4" y="0" width="5" height="3" fill="#484848"/><path d="M2 5.5 h9 M2 7.5 h9 M2 9.5 h9 M2 11.5 h9" stroke="#a8a8a8" stroke-width="1"/></svg>
<div style="left:158px;top:48px;width:1px;height:18px;background:#808080"></div>
<div style="left:159px;top:48px;width:1px;height:18px;background:#fff"></div>
<svg style="position:absolute;left:166px;top:49px" width="16" height="16" viewBox="0 0 16 16"><path d="M2 2 L14 14 M14 2 L2 14" stroke="#e00010" stroke-width="3.6" stroke-linecap="round"/><path d="M3 2.5 L13 12.5" stroke="#ff6070" stroke-width="1" opacity="0.6"/></svg>
<svg style="position:absolute;left:189px;top:49px" width="15" height="16" viewBox="0 0 15 16"><rect x="0.5" y="0.5" width="14" height="15" rx="1" fill="#fff" stroke="#707880"/><rect x="2.5" y="4" width="10" height="6.5" fill="#f4f4f4" stroke="#9098a0" stroke-width="0.8"/><rect x="5" y="3" width="2" height="1" fill="#9098a0"/><rect x="8" y="3" width="2" height="1" fill="#9098a0"/><rect x="3.5" y="6" width="1" height="1" fill="#1898f0"/><rect x="5.5" y="6.2" width="5" height="0.8" fill="#8890a0"/><rect x="3.5" y="8" width="1" height="1" fill="#707880"/><rect x="5.5" y="8.2" width="5" height="0.8" fill="#8890a0"/><rect x="6" y="13" width="3" height="1.5" fill="#20b8f0"/></svg>
<svg style="position:absolute;left:214px;top:49px" width="13" height="16" viewBox="0 0 13 16"><path d="M0.5 0.5 H10 L12.5 3 V15.5 H0.5z" fill="#fff" stroke="#808080"/><circle cx="6.3" cy="9" r="3.6" fill="none" stroke="#989898" stroke-width="2.2"/><path d="M6 8.5 l4.5 4.5 l0.5-4z" fill="#989898"/></svg>
<svg style="position:absolute;left:235px;top:49px" width="17" height="16" viewBox="0 0 17 16"><path d="M0.5 0.5 H9.5 L12.5 3.5 V15.5 H0.5z" fill="#fff8e0" stroke="#a0a0a0"/><rect x="2.5" y="5" width="1" height="1" fill="#202020"/><rect x="2.5" y="8" width="1" height="1" fill="#202020"/><rect x="2.5" y="11" width="1" height="1" fill="#202020"/><path d="M4.5 5.5 h5 M4.5 8.5 h5 M4.5 11.5 h5" stroke="#6068a8" stroke-width="1"/><path d="M7.5 8 H11.5 V5.5 L16 10 L11.5 14.5 V12 H7.5z" fill="#40c840" stroke="#30a030" stroke-width="0.5"/></svg>
<div style="left:258px;top:48px;width:1px;height:18px;background:#808080"></div>
<div style="left:259px;top:48px;width:1px;height:18px;background:#fff"></div>
<svg style="position:absolute;left:267px;top:49px" width="13" height="16" viewBox="0 0 13 16"><rect x="0" y="0" width="13" height="16" fill="#2840b0"/><rect x="3" y="1" width="9" height="14" fill="#5878e0"/><text x="7.5" y="13" font-family="Liberation Sans" font-weight="bold" font-size="13" fill="#fff" text-anchor="middle">?</text></svg>
<svg style="position:absolute;left:289px;top:52px" width="16" height="13" viewBox="0 0 16 13"><rect x="0.5" y="0.5" width="15" height="12" fill="#fff" stroke="#7888a0"/><rect x="1" y="1" width="14" height="2" fill="#d8dce8"/><rect x="1" y="3.5" width="14" height="1" fill="#a0a8b8"/><rect x="10.5" y="5" width="1" height="7.5" fill="#7888a0"/><rect x="12.5" y="6" width="1.5" height="1" fill="#4080d0"/><rect x="12.5" y="8" width="1.5" height="1" fill="#4080d0"/><rect x="12.5" y="10" width="1.5" height="1" fill="#4080d0"/><path d="M4.5 6 L7.5 8.5 L4.5 11z" fill="#30b030"/></svg>
<div style="left:312px;top:48px;width:1px;height:18px;background:#808080"></div>
<div style="left:313px;top:48px;width:1px;height:18px;background:#fff"></div>
<svg style="position:absolute;left:319px;top:49px" width="16" height="16" viewBox="0 0 16 16"><g transform="translate(2.5,0)"><path d="M1.5 15.6 C1.3 11.2 3.3 9 6.8 9 C10.8 9 13.2 11.4 13.2 15.6 Z" fill="url(#ub)" stroke="#3c6ea8" stroke-width="0.6"/><path d="M4.8 9.3 L6.3 12.6 L7.8 9.3z" fill="#fff"/><ellipse cx="6.2" cy="5.2" rx="2.9" ry="4.3" fill="url(#uh)"/><path d="M3.2 4.4 C3 1.3 4.7 0.1 6.4 0.1 C8.4 0.1 9.6 1.6 9.3 4.8 C8.7 3.3 7.6 2.5 6.3 2.5 C5 2.5 3.9 3.2 3.2 4.4z" fill="#2a2a2a"/></g><line x1="3.5" y1="3.5" x2="6.70" y2="3.50" stroke="#f8a818" stroke-width="1.2"/><line x1="3.5" y1="3.5" x2="5.76" y2="5.76" stroke="#f8a818" stroke-width="1.2"/><line x1="3.5" y1="3.5" x2="3.50" y2="6.70" stroke="#f8a818" stroke-width="1.2"/><line x1="3.5" y1="3.5" x2="1.24" y2="5.76" stroke="#f8a818" stroke-width="1.2"/><line x1="3.5" y1="3.5" x2="0.30" y2="3.50" stroke="#f8a818" stroke-width="1.2"/><line x1="3.5" y1="3.5" x2="1.24" y2="1.24" stroke="#f8a818" stroke-width="1.2"/><line x1="3.5" y1="3.5" x2="3.50" y2="0.30" stroke="#f8a818" stroke-width="1.2"/><line x1="3.5" y1="3.5" x2="5.76" y2="1.24" stroke="#f8a818" stroke-width="1.2"/><circle cx="3.5" cy="3.5" r="1.6" fill="#ffc030"/></svg>
<svg style="position:absolute;left:342px;top:49px" width="17" height="16" viewBox="0 0 17 16"><g transform="translate(0,1)"><path d="M0.3 13.2 C0.2 9.6 1.8 7.6 4.8 7.6 C7.9 7.6 9.4 9.6 9.4 13.2 Z" fill="url(#gb)" stroke="#3a8030" stroke-width="0.6"/><path d="M3.5 7.8 L4.7 10.2 L5.9 7.8z" fill="#fff"/><ellipse cx="4.8" cy="4.3" rx="2.6" ry="3.7" fill="url(#wh)"/><path d="M1.9 5.2 C1.6 1.2 3.2 0 4.9 0 C6.8 0 8 1.4 7.7 5.5 C7.3 3.6 6.6 2.4 4.9 2.4 C3.3 2.4 2.4 3.5 1.9 5.2z" fill="#e4cc6a"/><path d="M6 15.7 C5.8 12 7.6 10 11 10 C14.6 10 16.4 12 16.4 15.7 Z" fill="url(#ub)" stroke="#3c6ea8" stroke-width="0.6"/><path d="M9.4 10.2 L10.7 12.8 L12 10.2z" fill="#fff"/><ellipse cx="10.8" cy="6.6" rx="2.6" ry="3.8" fill="url(#uh)"/><path d="M8.1 6 C7.9 3.3 9.3 2.3 10.9 2.3 C12.7 2.3 13.8 3.6 13.6 6.3 C13 5 12.1 4.4 10.9 4.4 C9.7 4.4 8.7 5 8.1 6z" fill="#2a2a2a"/></g><line x1="3.5" y1="3.5" x2="6.70" y2="3.50" stroke="#f8a818" stroke-width="1.2"/><line x1="3.5" y1="3.5" x2="5.76" y2="5.76" stroke="#f8a818" stroke-width="1.2"/><line x1="3.5" y1="3.5" x2="3.50" y2="6.70" stroke="#f8a818" stroke-width="1.2"/><line x1="3.5" y1="3.5" x2="1.24" y2="5.76" stroke="#f8a818" stroke-width="1.2"/><line x1="3.5" y1="3.5" x2="0.30" y2="3.50" stroke="#f8a818" stroke-width="1.2"/><line x1="3.5" y1="3.5" x2="1.24" y2="1.24" stroke="#f8a818" stroke-width="1.2"/><line x1="3.5" y1="3.5" x2="3.50" y2="0.30" stroke="#f8a818" stroke-width="1.2"/><line x1="3.5" y1="3.5" x2="5.76" y2="1.24" stroke="#f8a818" stroke-width="1.2"/><circle cx="3.5" cy="3.5" r="1.6" fill="#ffc030"/></svg>
<div style="left:778px;top:16px;width:53px;height:1px;background:#fff"></div>
<div style="left:778px;top:17px;width:50px;height:1px;background:#808080"></div>
<div style="left:778px;top:18px;width:50px;height:4px;background:#404040"></div>
<div style="left:831px;top:17px;width:1px;height:530px;background:#fff"></div>
<div style="left:828px;top:17px;width:1px;height:156px;background:#d4d0c8"></div>
<div style="left:829px;top:17px;width:2px;height:156px;background:#fff"></div>
<div style="left:827px;top:21px;width:1px;height:152px;background:#404040"></div>
<div style="left:778px;top:22px;width:34px;height:1px;background:#fff"></div>
<div style="left:778px;top:23px;width:34px;height:14px;background:#d4d0c8"></div>
<div style="left:778px;top:37px;width:34px;height:1px;background:#808080"></div>
<div style="left:778px;top:38px;width:34px;height:1px;background:#404040"></div>
<div style="left:778px;top:39px;width:34px;height:17px;background:#d4d0c8"></div>
<div style="left:778px;top:56px;width:34px;height:100px;background:#fff"></div>
<div style="left:811px;top:22px;width:16px;height:134px;background-image:repeating-conic-gradient(#d4d0c8 0 25%, #fff 0 50%);background-size:2px 2px"></div>
<div style="left:811px;top:22px;width:14px;height:14px;background:#d4d0c8;border:1px solid;border-color:#fff #404040 #404040 #fff;box-shadow:inset -1px -1px #808080;"></div>
<svg style="position:absolute;left:814px;top:27px" width="9" height="5" viewBox="0 0 9 5"><path d="M0 5 L4.5 0 L9 5z" fill="#000"/></svg>
<div style="left:811px;top:38px;width:14px;height:6px;background:#d4d0c8;border:1px solid;border-color:#fff #404040 #404040 #fff;box-shadow:inset -1px -1px #808080;"></div>
<div style="left:811px;top:141px;width:14px;height:13px;background:#d4d0c8;border:1px solid;border-color:#fff #404040 #404040 #fff;box-shadow:inset -1px -1px #808080;"></div>
<svg style="position:absolute;left:814px;top:146px" width="9" height="5" viewBox="0 0 9 5"><path d="M0 0 L4.5 5 L9 0z" fill="#000"/></svg>
<div style="left:778px;top:156px;width:33px;height:16px;background-image:repeating-conic-gradient(#d4d0c8 0 25%, #fff 0 50%);background-size:2px 2px"></div>
<div style="left:795px;top:156px;width:14px;height:14px;background:#d4d0c8;border:1px solid;border-color:#fff #404040 #404040 #fff;box-shadow:inset -1px -1px #808080;"></div>
<svg style="position:absolute;left:801px;top:160px" width="5" height="8" viewBox="0 0 5 8"><path d="M0 0 v8 l4 -4z" fill="#000"/></svg>
<div style="left:811px;top:156px;width:16px;height:16px;background:#d4d0c8"></div>
<div style="left:778px;top:172px;width:50px;height:1px;background:#404040"></div>
<div style="left:778px;top:173px;width:52px;height:1px;background:#fff"></div>
<div style="left:778px;top:177px;width:52px;height:1px;background:#808080"></div>
<svg style="position:absolute;left:807px;top:185px" width="10" height="9" viewBox="0 0 10 9"><path d="M1 1 L9 8 M9 1 L1 8" stroke="#000" stroke-width="2"/></svg>
<div style="left:778px;top:201px;width:47px;height:2px;background:#808080"></div>
<div style="left:778px;top:230px;width:41px;height:1px;background:#fff"></div>
<div style="left:819px;top:230px;width:1px;height:302px;background:#404040"></div>
<div style="left:778px;top:531px;width:42px;height:1px;background:#404040"></div>
<div style="left:830px;top:178px;width:1px;height:365px;background:#fff"></div>
<div style="left:778px;top:247px;width:7px;height:97px;background-image:repeating-conic-gradient(#d4d0c8 0 25%, #fff 0 50%);background-size:2px 2px"></div>
<div style="left:776px;top:247px;width:6px;height:15px;background:#d4d0c8;border:1px solid;border-color:#fff #404040 #404040 #fff;box-shadow:inset -1px -1px #808080"></div>
<div style="left:776px;top:264px;width:6px;height:6px;background:#d4d0c8;border:1px solid;border-color:#fff #404040 #404040 #fff;box-shadow:inset -1px -1px #808080"></div>
<div style="left:776px;top:327px;width:6px;height:14px;background:#d4d0c8;border:1px solid;border-color:#fff #404040 #404040 #fff;box-shadow:inset -1px -1px #808080"></div>
<div style="left:784px;top:247px;width:1px;height:97px;background:#fff"></div>
<div style="left:778px;top:343px;width:7px;height:1px;background:#fff"></div>
<div style="left:778px;top:542px;width:52px;height:1px;background:#fff"></div>
<svg style="position:absolute;left:7px;top:572px" width="16" height="3" viewBox="0 0 16 3"><rect x="0" y="0" width="16" height="3" fill="#1040a0"/><rect x="1" y="0" width="14" height="1" fill="#6090e0"/></svg>
<svg style="position:absolute;left:33px;top:569px" width="14" height="6" viewBox="0 0 14 6"><path d="M2 6 C2 2 6 0.5 9 1.5" stroke="#2080e0" stroke-width="2.5" fill="none"/><path d="M6 3 C9 -1 13 0 13 2" stroke="#f0b020" stroke-width="1.5" fill="none"/></svg>
<div style="left:93px;top:571px;width:13px;height:4px;background:#c8a848;border-top:1px solid #806020"></div>
<svg style="position:absolute;left:258px;top:570px" width="10" height="5" viewBox="0 0 10 5"><rect x="0.5" y="0.5" width="8" height="5" fill="#fff" stroke="#405070"/><rect x="2" y="2" width="4" height="1" fill="#405070"/></svg>
</body></html>
